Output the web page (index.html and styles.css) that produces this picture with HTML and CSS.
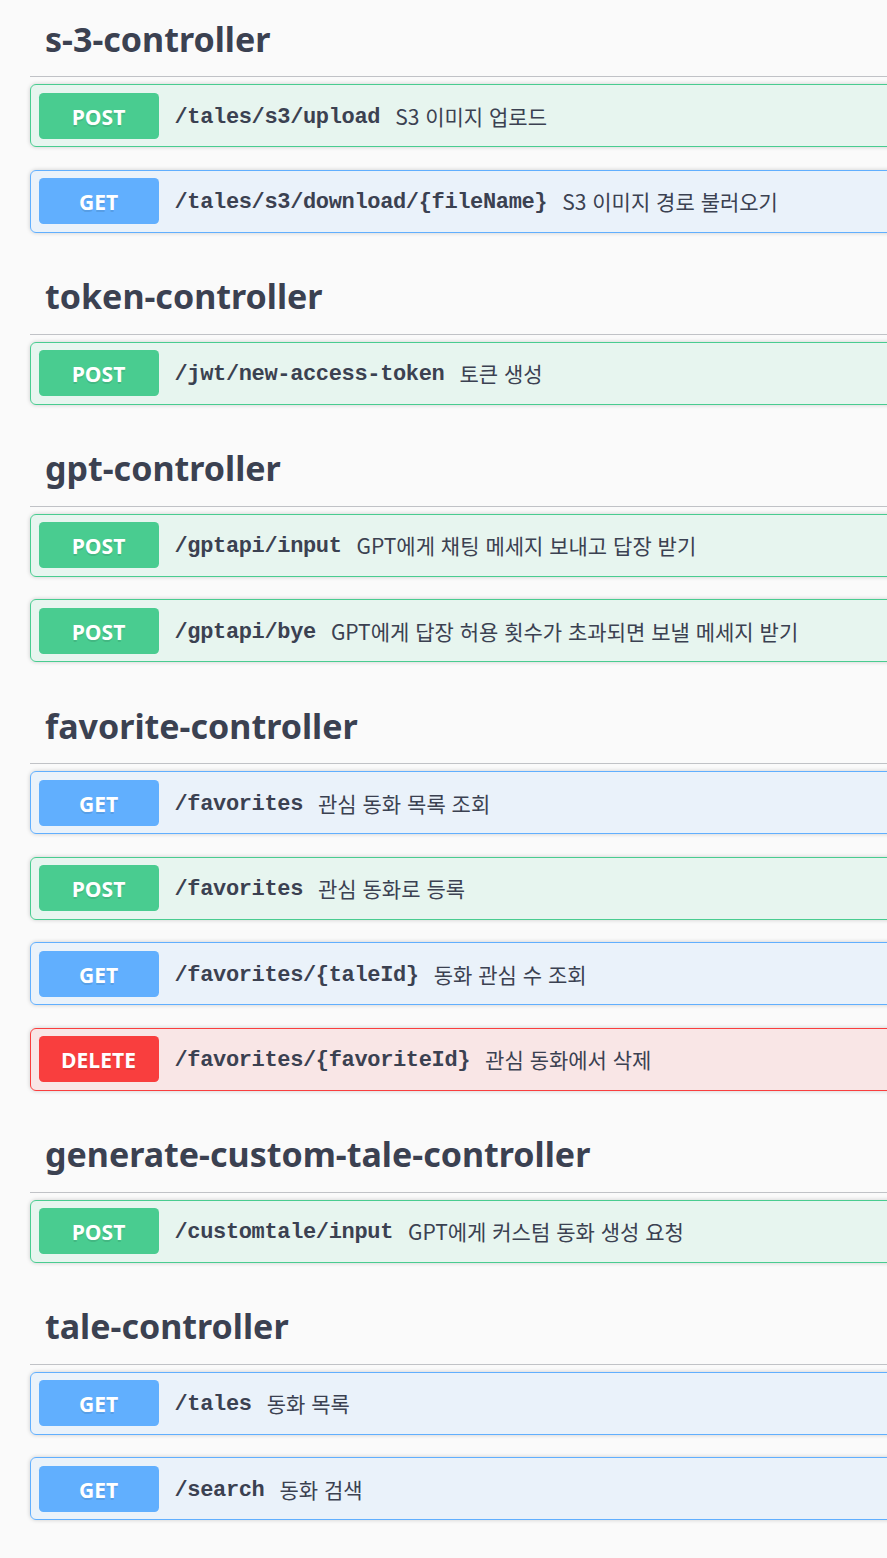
FILE: index.html
```html
<!DOCTYPE html>
<html lang="ko">
<head>
<meta charset="utf-8">
<title>Swagger UI</title>
<link rel="stylesheet" href="styles.css">
</head>
<body>
<div class="wrapper">
  <section class="tag-section first">
    <h3 class="tag">s-3-controller</h3>
    <div class="op op-post"><span class="method">POST</span><span class="path">/tales/s3/upload</span><span class="desc">S3 이미지 업로드</span></div>
    <div class="op op-get"><span class="method">GET</span><span class="path">/tales/s3/download/{fileName}</span><span class="desc">S3 이미지 경로 불러오기</span></div>
  </section>
  <section class="tag-section">
    <h3 class="tag">token-controller</h3>
    <div class="op op-post"><span class="method">POST</span><span class="path">/jwt/new-access-token</span><span class="desc">토큰 생성</span></div>
  </section>
  <section class="tag-section">
    <h3 class="tag">gpt-controller</h3>
    <div class="op op-post"><span class="method">POST</span><span class="path">/gptapi/input</span><span class="desc">GPT에게 채팅 메세지 보내고 답장 받기</span></div>
    <div class="op op-post"><span class="method">POST</span><span class="path">/gptapi/bye</span><span class="desc">GPT에게 답장 허용 횟수가 초과되면 보낼 메세지 받기</span></div>
  </section>
  <section class="tag-section">
    <h3 class="tag">favorite-controller</h3>
    <div class="op op-get"><span class="method">GET</span><span class="path">/favorites</span><span class="desc">관심 동화 목록 조회</span></div>
    <div class="op op-post"><span class="method">POST</span><span class="path">/favorites</span><span class="desc">관심 동화로 등록</span></div>
    <div class="op op-get"><span class="method">GET</span><span class="path">/favorites/{taleId}</span><span class="desc">동화 관심 수 조회</span></div>
    <div class="op op-delete"><span class="method">DELETE</span><span class="path">/favorites/{favoriteId}</span><span class="desc">관심 동화에서 삭제</span></div>
  </section>
  <section class="tag-section">
    <h3 class="tag">generate-custom-tale-controller</h3>
    <div class="op op-post"><span class="method">POST</span><span class="path">/customtale/input</span><span class="desc">GPT에게 커스텀 동화 생성 요청</span></div>
  </section>
  <section class="tag-section">
    <h3 class="tag">tale-controller</h3>
    <div class="op op-get"><span class="method">GET</span><span class="path">/tales</span><span class="desc">동화 목록</span></div>
    <div class="op op-get"><span class="method">GET</span><span class="path">/search</span><span class="desc">동화 검색</span></div>
  </section>
</div>
</body>
</html>
```

FILE: styles.css
```css
html, body {
  margin: 0;
  padding: 0;
  background: #fafafa;
  overflow: hidden;
}

body {
  color: #3b4151;
  font-family: "Noto Sans", "Noto Sans CJK KR", sans-serif;
}

.wrapper {
  width: 1400px;
  padding-left: 30px;
}

.tag-section {
  display: flex;
  flex-direction: column;
}

.tag-section.first {
  margin-top: -2.5px;
}

.tag {
  margin: 0 0 7px;
  padding: 17px 30px 13px 15px;
  line-height: 48.5px;
  height: 48.5px;
  font-family: "Noto Sans", "Noto Sans CJK KR", sans-serif;
  font-size: 34px;
  font-weight: 700;
  color: #3b4151;
  border-bottom: 1px solid rgba(59, 65, 81, 0.3);
}

.op {
  display: flex;
  align-items: center;
  padding: 7.5px;
  margin-bottom: 22.5px;
  border: 1px solid #000;
  border-radius: 6px;
  box-shadow: 0 0 4.5px rgba(0, 0, 0, 0.19);
}

.op-post {
  background: rgba(73, 204, 144, 0.1);
  border-color: #49cc90;
}
.op-post .method { background: #49cc90; }

.op-get {
  background: rgba(97, 175, 254, 0.1);
  border-color: #61affe;
}
.op-get .method { background: #61affe; }

.op-delete {
  background: rgba(249, 62, 62, 0.1);
  border-color: #f93e3e;
}
.op-delete .method { background: #f93e3e; }

.method {
  flex: none;
  width: 120px;
  height: 46px;
  padding-top: 2px;
  box-sizing: border-box;
  display: flex;
  align-items: center;
  justify-content: center;
  border-radius: 4.5px;
  color: #fff;
  font-family: "Open Sans", sans-serif;
  font-size: 21px;
  font-weight: 700;
  text-shadow: 0 1.5px 0 rgba(0, 0, 0, 0.1);
}

.path {
  padding: 3px 15px 0 16px;
  font-family: "Liberation Mono", monospace;
  font-size: 22px;
  letter-spacing: -0.35px;
  font-weight: 700;
  color: #3b4151;
}

.desc {
  font-family: "Noto Sans CJK KR", sans-serif;
  font-size: 21px;
  color: #3b4151;
}
```
